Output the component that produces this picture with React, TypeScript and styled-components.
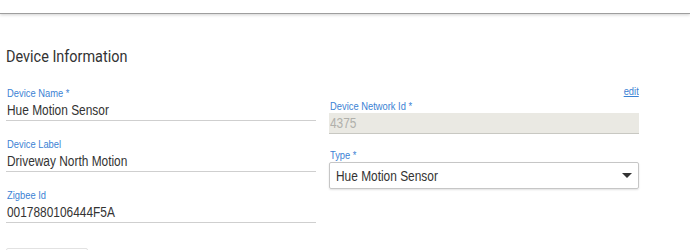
import React from "react";
import styled, { createGlobalStyle } from "styled-components";

const GlobalStyle = createGlobalStyle`
  body {
    margin: 0;
    background: #ffffff;
    font-family: "Liberation Sans", Arial, sans-serif;
  }
`;

const TopBar = styled.div`
  height: 13px;
  background: #ffffff;
  border-bottom: 1px solid #9e9e9e;
  box-shadow: 0 1px 3px rgba(0, 0, 0, 0.18);
`;

const Page = styled.div`
  padding: 0 6px;
`;

// the screenshot's text is a little narrow, so glyphs get squeezed sideways
const Squeeze = styled.span<{ $origin?: string }>`
  display: inline-block;
  white-space: nowrap;
  transform: scaleX(0.85);
  transform-origin: ${(p) => p.$origin ?? "left"} center;
`;

const Title = styled.h2`
  margin: 32px 0 18px 0;
  font-family: Roboto, "Liberation Sans", sans-serif;
  font-size: 17px;
  font-weight: 400;
  line-height: 20px;
  color: #333333;
`;

const Grid = styled.div`
  display: grid;
  grid-template-columns: 310px 310px;
  column-gap: 13px;
  align-items: start;
`;

const Column = styled.div<{ $offset?: number }>`
  display: flex;
  flex-direction: column;
  padding-top: ${(p) => p.$offset ?? 0}px;
`;

const Field = styled.div<{ $gap?: number }>`
  display: flex;
  flex-direction: column;
  margin-bottom: ${(p) => p.$gap ?? 17}px;
`;

const Label = styled.label`
  font-size: 11px;
  line-height: 13px;
  color: #3b82d4;
  padding-left: 1px;
`;

const Value = styled.div`
  height: 20px;
  line-height: 20px;
  font-size: 14px;
  color: #333333;
  padding-left: 1px;
  border-bottom: 1px solid #cfcfcf;
`;

const Disabled = styled.div`
  height: 20px;
  line-height: 20px;
  font-size: 14px;
  color: #b0b0ab;
  background: #eae9e3;
  padding-left: 1px;
  border-bottom: 1px solid #c8c8c2;
`;

const EditRow = styled.div`
  display: flex;
  justify-content: flex-end;
  height: 15px;
  margin-top: 1px;
`;

const EditLink = styled.a`
  font-size: 11px;
  line-height: 13px;
  color: #3b82d4;
  cursor: pointer;
  & > span {
    text-decoration: underline;
  }
`;

const Select = styled.div`
  height: 25px;
  display: flex;
  align-items: center;
  justify-content: space-between;
  padding: 0 6px 0 6px;
  font-size: 14px;
  color: #333333;
  border: 1px solid #c6c6c6;
  border-radius: 2px;
  box-shadow: 0 1px 2px rgba(0, 0, 0, 0.12);
`;

const Caret = styled.span`
  width: 0;
  height: 0;
  border-left: 5px solid transparent;
  border-right: 5px solid transparent;
  border-top: 5px solid #333333;
`;

const Button = styled.button`
  margin-top: 8px;
  width: 82px;
  height: 30px;
  border: 1px solid #e2e2e2;
  border-radius: 2px;
  background: #ffffff;
`;

export default function App() {
  return (
    <>
      <GlobalStyle />
      <TopBar />
      <Page>
        <Title>
          <Squeeze>Device Information</Squeeze>
        </Title>
        <Grid>
          <Column $offset={3}>
            <Field>
              <Label>
                <Squeeze>Device Name *</Squeeze>
              </Label>
              <Value>
                <Squeeze>Hue Motion Sensor</Squeeze>
              </Value>
            </Field>
            <Field>
              <Label>
                <Squeeze>Device Label</Squeeze>
              </Label>
              <Value>
                <Squeeze>Driveway North Motion</Squeeze>
              </Value>
            </Field>
            <Field>
              <Label>
                <Squeeze>Zigbee Id</Squeeze>
              </Label>
              <Value>
                <Squeeze>0017880106444F5A</Squeeze>
              </Value>
            </Field>
            <Button aria-label="save" />
          </Column>
          <Column>
            <EditRow>
              <EditLink>
                <Squeeze $origin="right">edit</Squeeze>
              </EditLink>
            </EditRow>
            <Field $gap={15}>
              <Label>
                <Squeeze>Device Network Id *</Squeeze>
              </Label>
              <Disabled>
                <Squeeze>4375</Squeeze>
              </Disabled>
            </Field>
            <Field>
              <Label>
                <Squeeze>Type *</Squeeze>
              </Label>
              <Select>
                <Squeeze>Hue Motion Sensor</Squeeze>
                <Caret />
              </Select>
            </Field>
          </Column>
        </Grid>
      </Page>
    </>
  );
}
